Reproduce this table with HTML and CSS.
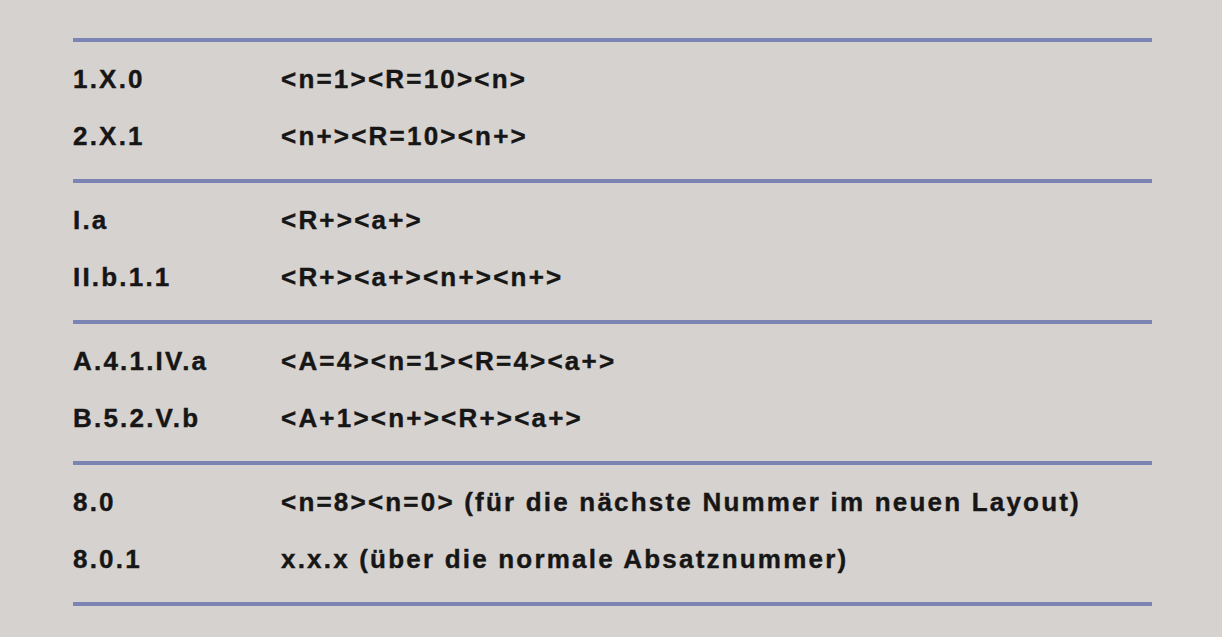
FILE: index.html
```html
<!DOCTYPE html>
<html lang="de">
<head>
<meta charset="utf-8">
<title>Nummerierung</title>
<link rel="stylesheet" href="styles.css">
</head>
<body>
<main class="table">
  <section class="group">
    <div class="row"><span class="num">1.X.0</span><span class="code">&lt;n=1&gt;&lt;R=10&gt;&lt;n&gt;</span></div>
    <div class="row"><span class="num">2.X.1</span><span class="code">&lt;n+&gt;&lt;R=10&gt;&lt;n+&gt;</span></div>
  </section>
  <section class="group">
    <div class="row"><span class="num">I.a</span><span class="code">&lt;R+&gt;&lt;a+&gt;</span></div>
    <div class="row"><span class="num">II.b.1.1</span><span class="code">&lt;R+&gt;&lt;a+&gt;&lt;n+&gt;&lt;n+&gt;</span></div>
  </section>
  <section class="group">
    <div class="row"><span class="num">A.4.1.IV.a</span><span class="code">&lt;A=4&gt;&lt;n=1&gt;&lt;R=4&gt;&lt;a+&gt;</span></div>
    <div class="row"><span class="num">B.5.2.V.b</span><span class="code">&lt;A+1&gt;&lt;n+&gt;&lt;R+&gt;&lt;a+&gt;</span></div>
  </section>
  <section class="group last">
    <div class="row"><span class="num">8.0</span><span class="code">&lt;n=8&gt;&lt;n=0&gt; (für die nächste Nummer im neuen Layout)</span></div>
    <div class="row"><span class="num">8.0.1</span><span class="code">x.x.x (über die normale Absatznummer)</span></div>
  </section>
</main>
</body>
</html>
```

FILE: styles.css
```css
html, body {
  margin: 0;
  padding: 0;
  background: #d6d2cf;
}
body {
  padding: 38px 0 0 73px;
  font-family: "Liberation Sans", Arial, sans-serif;
  font-weight: bold;
  color: #161616;
}
.table {
  width: 1079px;
}
.group {
  border-top: 4px solid #7b84b2;
  padding: 9px 0 14px 0;
}
.group.last {
  border-bottom: 4px solid #7b84b2;
}
.row {
  display: grid;
  grid-template-columns: 208px 1fr;
  height: 57px;
  line-height: 57px;
  font-size: 26px;
  letter-spacing: 2.2px;
  white-space: nowrap;
  -webkit-text-stroke: 0.4px #161616;
}
```
